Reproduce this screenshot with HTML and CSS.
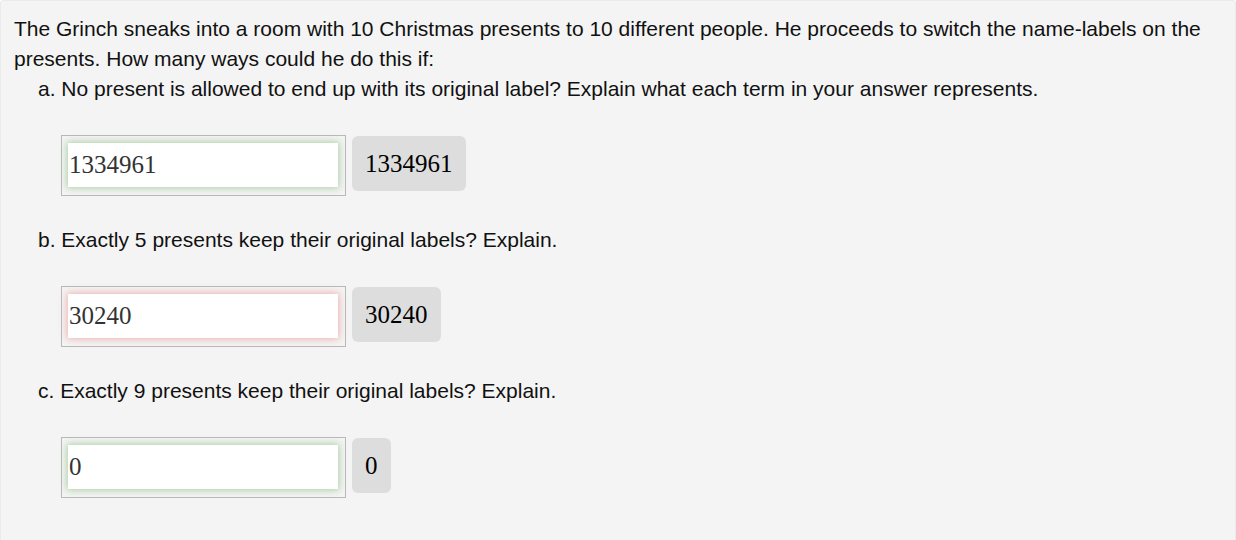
FILE: index.html
```html
<!DOCTYPE html>
<html>
<head>
<meta charset="utf-8">
<link rel="stylesheet" href="styles.css">
</head>
<body>
<div class="card">
  <p class="question">The Grinch sneaks into a room with 10 Christmas presents to 10 different people. He proceeds to switch the name-labels on the presents. How many ways could he do this if:</p>
  <div class="part">
    <p class="prompt">a. No present is allowed to end up with its original label? Explain what each term in your answer represents.</p>
    <div class="answer-row">
      <span class="field"><input class="entry correct" type="text" value="1334961"></span>
      <span class="badge">1334961</span>
    </div>
  </div>
  <div class="part">
    <p class="prompt">b. Exactly 5 presents keep their original labels? Explain.</p>
    <div class="answer-row">
      <span class="field"><input class="entry wrong" type="text" value="30240"></span>
      <span class="badge">30240</span>
    </div>
  </div>
  <div class="part">
    <p class="prompt">c. Exactly 9 presents keep their original labels? Explain.</p>
    <div class="answer-row">
      <span class="field"><input class="entry correct" type="text" value="0"></span>
      <span class="badge">0</span>
    </div>
  </div>
</div>
</body>
</html>
```

FILE: styles.css
```css
html, body {
  margin: 0;
  padding: 0;
  background: #ffffff;
}

.card {
  box-sizing: border-box;
  width: 1236px;
  min-height: 560px;
  background: #f4f4f4;
  border: 1px solid #ebebeb;
  border-radius: 3px;
  padding: 13px 13px 0 13px;
  font-family: "Liberation Sans", Arial, sans-serif;
  font-size: 21px;
  line-height: 30px;
  color: #111;
}

.question {
  margin: 0;
}

.part {
  padding-left: 24px;
}

.prompt {
  margin: 0;
}

.answer-row {
  display: flex;
  align-items: flex-start;
  gap: 6px;
  margin: 31px 0 29px 23px;
}

.field {
  display: block;
  box-sizing: border-box;
  width: 285px;
  height: 61px;
  border: 1px solid #b9b9b9;
  padding: 7px 7px 7px 6px;
}

.entry {
  display: block;
  box-sizing: border-box;
  width: 100%;
  height: 44px;
  border: none;
  outline: none;
  background: #ffffff;
  padding: 0 0 0 1px;
  margin: 0;
  font-family: "Liberation Serif", "Times New Roman", serif;
  font-size: 25px;
  color: #333;
}

.entry.correct {
  box-shadow: 0 0 7px 1px rgba(140, 190, 130, 0.7);
}

.entry.wrong {
  box-shadow: 0 0 7px 1px rgba(235, 140, 140, 0.65);
}

.badge {
  display: block;
  margin-top: 1px;
  height: 55px;
  line-height: 55px;
  padding: 0 13px;
  background: #dddddd;
  border-radius: 6px;
  font-family: "Liberation Serif", "Times New Roman", serif;
  font-size: 25px;
  color: #000;
}
```
